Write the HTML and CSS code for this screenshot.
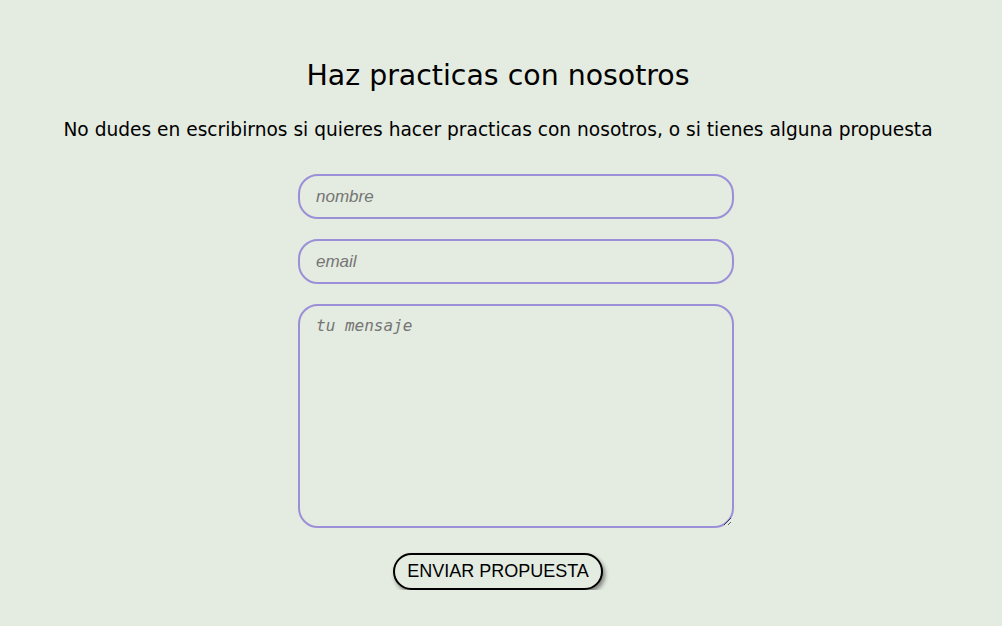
FILE: index.html
```html
<!DOCTYPE html>
<html lang="es">
<head>
  <meta charset="UTF-8">
  <meta name="viewport" content="width=device-width, initial-scale=1.0">
  <title>Haz practicas con nosotros</title>
  <link rel="stylesheet" href="styles.css">
</head>
<body>
  <div class="container">
    <h1>Haz practicas con nosotros</h1>
    <p class="intro">No dudes en escribirnos si quieres hacer practicas con nosotros, o si tienes alguna propuesta</p>
    <form class="contact">
      <input type="text" placeholder="nombre">
      <input type="email" placeholder="email">
      <textarea placeholder="tu mensaje"></textarea>
      <button type="button">ENVIAR PROPUESTA</button>
    </form>
  </div>
</body>
</html>
```

FILE: styles.css
```css
body {
  font-family: "DejaVu Sans", sans-serif;
  background: #e4ebe0;
  margin: 0;
  padding: 0;
  color: #000;
}
.container {
  padding: 58px 6px 0 0;
  text-align: center;
}
h1 {
  font-size: 28.4px;
  line-height: 36px;
  font-weight: normal;
  margin: 0 0 24px;
}
.intro {
  font-size: 18.6px;
  line-height: 24px;
  margin: 0 0 32px;
}
.contact {
  width: 400px;
  margin: 0 auto;
  display: flex;
  flex-direction: column;
  align-items: flex-start;
}
input, textarea {
  width: 100%;
  padding: 10px 16px;
  margin: 0 0 20px;
  border: 2px solid #9b8fd8;
  border-radius: 20px;
  background: transparent;
  font-family: "Liberation Sans", Arial, sans-serif;
  font-size: 17px;
  color: #333;
  outline: none;
}
input {
  height: 21px;
}
textarea {
  height: 200px;
  font-family: "DejaVu Sans Mono", monospace;
  font-size: 16px;
  margin-bottom: 25px;
  resize: vertical;
}
::placeholder {
  font-style: italic;
  color: #757575;
}
button {
  align-self: center;
  padding: 6px 12px;
  font-family: "Liberation Sans", Arial, sans-serif;
  font-size: 18px;
  color: #000;
  background: #e4ebe0;
  border: 2px solid #000;
  border-radius: 19px;
  box-shadow: 2px 3px 4px rgba(0, 0, 0, 0.45);
}
```
